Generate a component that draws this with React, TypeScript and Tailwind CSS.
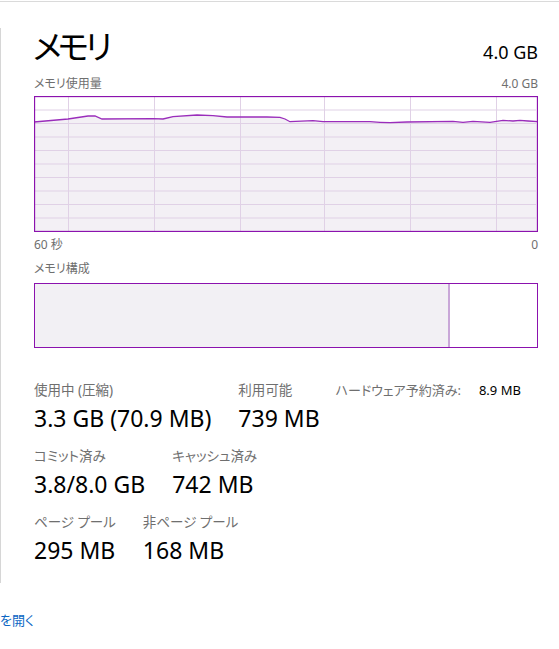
import React from "react";

const pts: [number, number][] = [
  [0, 26], [34, 23], [54, 20], [61, 20], [68, 23], [119, 22.7], [129, 23], [139, 20.7],
  [163, 19], [179, 19.7], [193, 21], [233, 21], [246, 21.3], [251, 23], [256, 25.7],
  [279, 24.7], [289, 25.7], [336, 25.7], [346, 26.3], [356, 26.7], [373, 26], [419, 25.3],
  [429, 26.3], [439, 25.3], [456, 26.3], [469, 24.3], [479, 25], [486, 24.3], [494, 25], [504, 25.7],
];

function Chart() {
  const W = 504;
  const H = 136;
  const line = pts.map((p) => `${p[0]},${p[1]}`).join(" ");
  const area = `0,${H} ${line} ${W},${H}`;
  const hs = [13.5, 27, 40.5, 54, 67.5, 81, 94.5, 108, 121.5];
  const vs = [34, 120, 206, 290, 376, 462];
  return (
    <svg width={W} height={H} viewBox={`0 0 ${W} ${H}`} className="block">
      <rect x={0} y={0} width={W} height={H} fill="#ffffff" />
      <polygon points={area} fill="#f3f0f5" />
      {hs.map((y) => (
        <line key={"h" + y} x1={1} x2={W - 2} y1={y + 0.5} y2={y + 0.5} stroke="#e0d1e6" strokeWidth={1} />
      ))}
      {vs.map((x) => (
        <line key={"v" + x} x1={x + 0.5} x2={x + 0.5} y1={1} y2={H - 1} stroke="#e0d1e6" strokeWidth={1} />
      ))}
      <polyline points={line} fill="none" stroke="#9a2dbb" strokeWidth={1.3} />
      <rect x={0.5} y={0.5} width={W - 1} height={H - 1} fill="none" stroke="#8b12ae" strokeWidth={1.3} />
    </svg>
  );
}

export default function App() {
  return (
    <div className="w-[559px] h-[649px] bg-white overflow-hidden font-['Noto_Sans','Noto_Sans_CJK_JP',sans-serif] [font-feature-settings:'palt'] text-black">
      <div className="h-px mt-px bg-[#dadada]" />
      <div className="mt-[26px] h-[555px] border-l border-[#d6d6d6] pl-[33px] pr-[21px]">
        <div className="flex justify-between items-baseline h-[38px]">
          <div className="text-[33px] leading-[38px] tracking-[-4px] -ml-[1px]">メモリ</div>
          <div className="text-[18px] leading-[24px]">4.0 GB</div>
        </div>
        <div className="mt-[10px] flex justify-between text-[12px] leading-[16px] text-[#6f6f6f]">
          <span>メモリ使用量</span>
          <span>4.0 GB</span>
        </div>
        <div className="mt-[4px]">
          <Chart />
        </div>
        <div className="mt-[5px] flex justify-between text-[12px] leading-[16px] text-[#6f6f6f]">
          <span>60 秒</span>
          <span>0</span>
        </div>
        <div className="mt-[8px] text-[12px] leading-[16px] text-[#6f6f6f]">メモリ構成</div>
        <div className="mt-[6px] h-[65px] border border-[#8b12ae] flex">
          <div className="w-[413px] bg-[#f2f0f4]" />
          <div className="w-[2px] bg-[#c9a7d8]" />
          <div className="flex-1 bg-white" />
        </div>

        <div className="mt-[32px] flex items-start">
          <div className="flex gap-[27px]">
            <div>
              <div className="text-[13.5px] leading-[20px] text-[#6f6f6f]">使用中 (圧縮)</div>
              <div className="mt-[3px] text-[23px] leading-[30px]">3.3 GB (70.9 MB)</div>
            </div>
            <div>
              <div className="text-[13.5px] leading-[20px] text-[#6f6f6f]">利用可能</div>
              <div className="mt-[3px] text-[23px] leading-[30px]">739 MB</div>
            </div>
          </div>
          <div className="ml-[16px] flex items-baseline text-[13px] leading-[20px]">
            <span className="text-[#6f6f6f]">ハードウェア予約済み:</span>
            <span className="ml-[18px]">8.9 MB</span>
          </div>
        </div>

        <div className="mt-[13px] flex gap-[27px]">
          <div>
            <div className="text-[13.5px] leading-[20px] text-[#6f6f6f]">コミット済み</div>
            <div className="mt-[3px] text-[23px] leading-[30px]">3.8/8.0 GB</div>
          </div>
          <div>
            <div className="text-[13.5px] leading-[20px] text-[#6f6f6f]">キャッシュ済み</div>
            <div className="mt-[3px] text-[23px] leading-[30px]">742 MB</div>
          </div>
        </div>

        <div className="mt-[13px] flex gap-[27px]">
          <div>
            <div className="text-[13.5px] leading-[20px] text-[#6f6f6f]">ページ プール</div>
            <div className="mt-[3px] text-[23px] leading-[30px]">295 MB</div>
          </div>
          <div>
            <div className="text-[13.5px] leading-[20px] text-[#6f6f6f]">非ページ プール</div>
            <div className="mt-[3px] text-[23px] leading-[30px]">168 MB</div>
          </div>
        </div>
      </div>
      <div className="mt-[28px] text-[13px] leading-[18px] text-[#0b66c3]">を開く</div>
    </div>
  );
}
